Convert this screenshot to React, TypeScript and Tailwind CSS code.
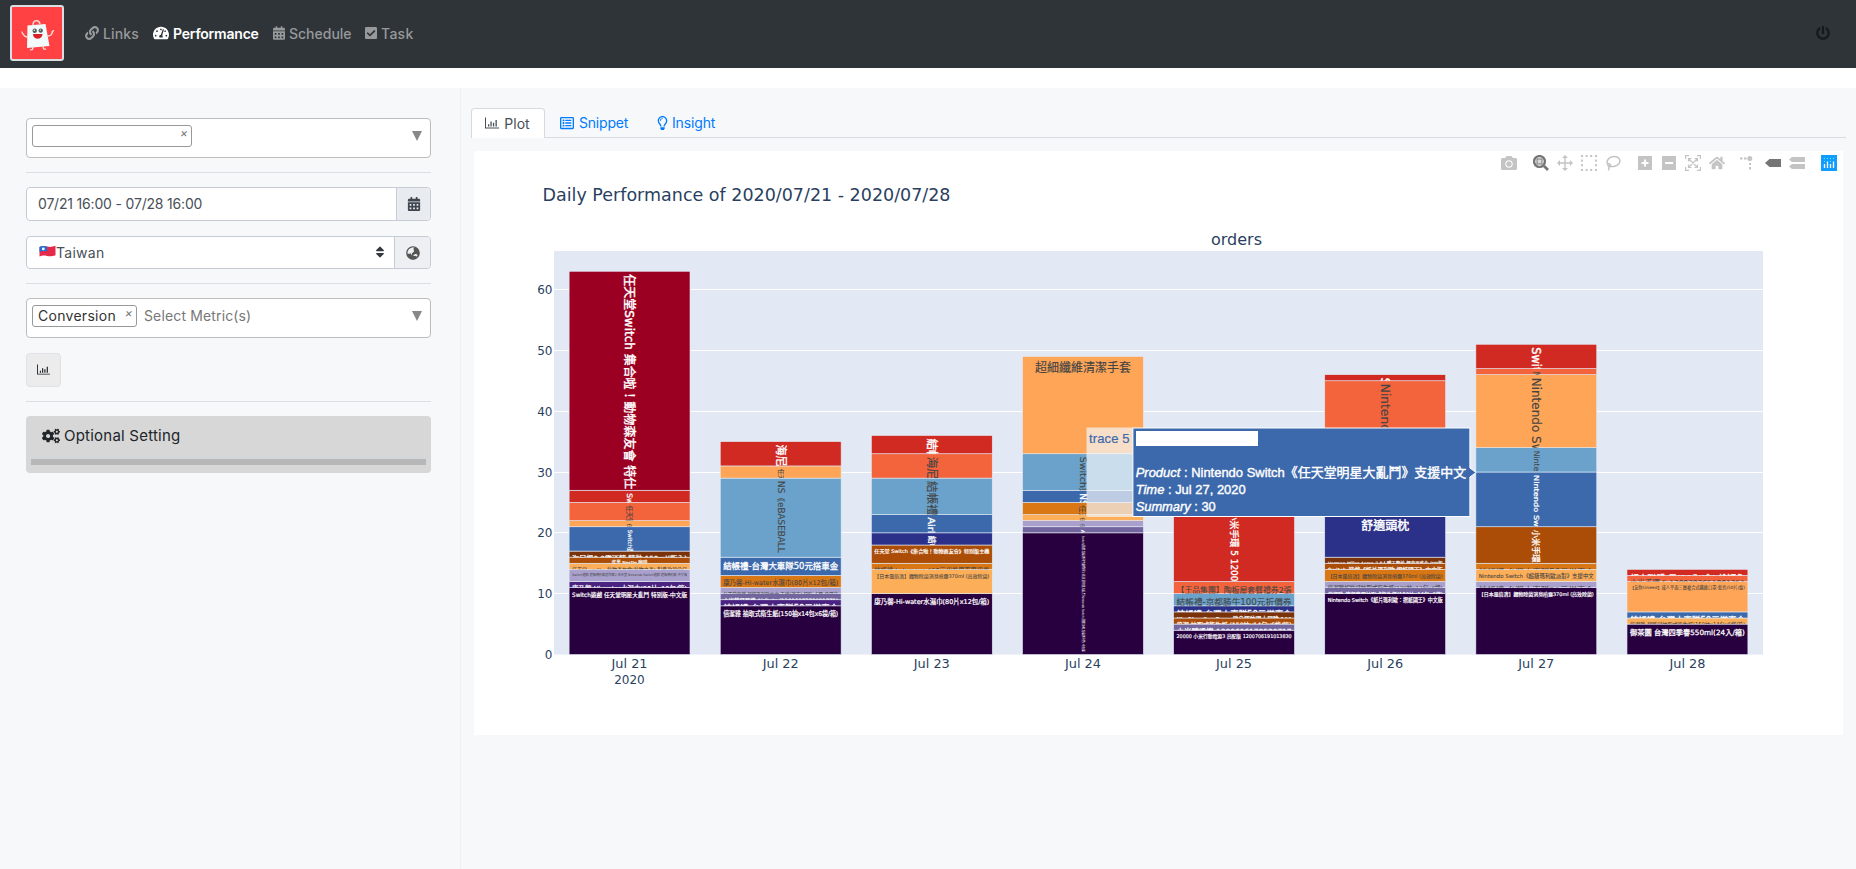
import React from "react";
import {
  FaLink,
  FaTachometerAlt,
  FaCalendarAlt,
  FaCheckSquare,
  FaPowerOff,
  FaCogs,
  FaGlobeAsia,
  FaSort,
  FaRegListAlt,
  FaRegLightbulb,
  FaCamera,
  FaHome,
} from "react-icons/fa";

const PURPLE = "#29003f";
const VIOLET = "#4a2480";
const MAUVE = "#73669f";
const LILAC = "#a9a0cd";
const APRICOT = "#fdae58";
const OCHRE = "#d97714";
const RUST = "#ab4d07";
const BROWN = "#7a320a";
const NAVY = "#2b3088";
const BLUE = "#3c69ab";
const SKY = "#6aa2cb";
const PEACH = "#fea557";
const ORANGE = "#f3633c";
const RED = "#d02a22";
const CRIMSON = "#9b0022";
const LIGHT_FILLS = [LILAC, APRICOT, OCHRE, SKY, PEACH, ORANGE];

type Segment = {
  to: number;
  fill: string;
  text: string;
  size: number;
  vertical?: boolean;
  length?: number;
};

const h = (to: number, fill: string, text: string, size: number, length = 115): Segment => ({ to, fill, text, size, length });
const v = (to: number, fill: string, text: string, size: number, length?: number): Segment => ({
  to,
  fill,
  text,
  size,
  length,
  vertical: true,
});

const days: { label: string; segments: Segment[] }[] = [
  {
    label: "Jul 21",
    segments: [
      h(11, PURPLE, "Switch遊戲 任天堂明星大亂鬥 特別版-中文版", 6),
      h(12, VIOLET, "康乃馨-Hi-water水濕巾(80片x12包/箱)", 6.6),
      h(14, LILAC, "Switch遊戲 超級瑪利歐創作家2 任天堂 Nintendo Switch遊戲 超級瑪利歐-中文版", 3.4),
      h(15, APRICOT, "任天堂 amiibo 動物森友會(動物之森) 對應款項公仔", 5.2),
      h(16, RUST, "雀巢 Nestle 咖啡", 4, 36),
      h(17, BROWN, "海尼根0.0零酒精 精裝 150ml(瓶入)", 7),
      v(21, BLUE, "Switch遊戲 任天堂", 5.6),
      v(22, PEACH, "任天堂", 4.5),
      v(25, ORANGE, "任天堂 Switch", 6.3),
      v(27, RED, "Switch", 7.5),
      v(63, CRIMSON, "任天堂Switch 集合啦！動物森友會 特仕", 12, 215),
    ],
  },
  {
    label: "Jul 22",
    segments: [
      h(8, PURPLE, "倍潔雅 抽取式衛生紙(150抽x14包x6袋/箱)", 6.6),
      h(9, VIOLET, "結帳禮-台灣大車隊50元搭車金", 8),
      h(10, MAUVE, "小米藍牙耳機 AirDots (1200608370901771)", 6),
      h(11, LILAC, "任天堂遊戲 超級瑪利歐中文 支援(漢字) 冒險 卡匣-公司貨", 5),
      h(13, OCHRE, "康乃馨-Hi-water水濕巾(80片x12包/箱)", 6.6),
      h(16, BLUE, "結帳禮-台灣大車隊50元搭車金", 8.5),
      v(29, SKY, "NS《eBASEBALL", 8.4, 71.5),
      v(31, PEACH, "任天堂", 6),
      v(35, RED, "海尼根", 11),
    ],
  },
  {
    label: "Jul 23",
    segments: [
      h(10, PURPLE, "康乃馨-Hi-water水濕巾(80片x12包/箱)", 6.6),
      h(14, APRICOT, "【日本風倍清】織物除菌消臭噴霧370ml (高效除菌)", 5.1),
      h(15, OCHRE, "結帳禮-Lalamove $50元代券優惠專用券", 6.6),
      h(18, RUST, "任天堂 Switch《集合啦！動物森友會》特別版主機", 5.1),
      v(20, NAVY, "結帳禮", 8),
      v(23, BLUE, "AirPods", 9.5),
      v(29, SKY, "結帳禮-台灣", 11.6),
      v(33, ORANGE, "海尼根", 11.6),
      v(36, RED, "結帳禮", 11.6),
    ],
  },
  {
    label: "Jul 24",
    segments: [
      v(20, PURPLE, "Switch遊戲 超級瑪利歐創作家2 任天堂明星大亂鬥 Nintendo Switch 遊戲主機 超級瑪利歐-中文版", 3.2, 116),
      v(21, MAUVE, "A", 5),
      v(22, LILAC, "任天", 4.2),
      v(23, APRICOT, "任天", 4.5),
      v(25, OCHRE, "任天堂", 7),
      v(27, BLUE, "NS Lite", 9),
      v(33, SKY, "Switch遊戲", 8.7, 50),
      h(49, PEACH, "超細纖維清潔手套", 12, 96),
    ],
  },
  {
    label: "Jul 25",
    segments: [
      h(4, PURPLE, "20000 小米行動電源3 高配版 1200706191013830", 5),
      h(5, MAUVE, "小米體重機 1200606170520717", 7),
      h(6, RUST, "倍潔 抽取式衛生紙 (150抽x14包x6袋/箱)", 6),
      h(7, BROWN, "Nin Ring Con Bung 健身運動環大冒險 100", 6.4),
      h(8, NAVY, "結帳禮-台灣大車隊50元搭車金", 8),
      h(10, SKY, "結帳禮-京都勝牛100元折價券", 8.2),
      h(12, ORANGE, "【王品集團】陶板屋套餐禮券2張", 7.8),
      v(24, RED, "小米手環 5 1200", 9.2, 70),
    ],
  },
  {
    label: "Jul 26",
    segments: [
      h(10, PURPLE, "Nintendo Switch《紙片瑪利歐：摺紙國王》中文版", 5.4),
      h(11, MAUVE, "倍潔雅-清潔專用抽取式衛生紙(150抽x14包x6袋)", 5),
      h(12, LILAC, "倍潔雅超質感抽取式衛生紙(120抽x12包x6袋)", 5.2),
      h(14, OCHRE, "【日本風倍清】織物除菌消臭噴霧370ml (高效除菌)", 5.1),
      h(15, RUST, "Switch 遊戲《紙片瑪利歐 摺紙國王》中文版", 5.6),
      h(16, BROWN, "Herman Miller Aeron 2.0人體工學椅 經典再進化-DW版", 4.5),
      h(23, NAVY, "舒適頭枕", 12, 48),
      v(45, ORANGE, "Nintendo Switch", 12, 100),
      v(46, RED, "Switch", 12),
    ],
  },
  {
    label: "Jul 27",
    segments: [
      h(11, PURPLE, "【日本風倍清】織物除菌消臭噴霧370ml (高效除菌)", 5.1),
      h(12, LILAC, "結帳禮-台灣大車隊50元搭車金", 7.8),
      h(14, APRICOT, "Nintendo Switch《超級瑪利歐派對》支援中文", 5.5),
      h(15, OCHRE, "結帳禮-台灣大車隊50元搭車金", 8),
      v(21, RUST, "小米手環 5", 8.2),
      v(30, BLUE, "Nintendo Switch", 6.8, 67),
      v(34, SKY, "Nintendo", 7.7),
      v(46, PEACH, "Nintendo Switch", 12, 98),
      v(47, ORANGE, "Nin", 9),
      v(51, RED, "Switch", 11.4),
    ],
  },
  {
    label: "Jul 28",
    segments: [
      h(5, PURPLE, "御茶園 台灣四季春550ml(24入/箱)", 7.2),
      h(6, APRICOT, "倍潔雅 超質感抽取式衛生紙(150抽x14包x6袋/箱)", 5),
      h(7, BLUE, "結帳禮-台灣大車隊50元搭車金", 8),
      h(12, PEACH, "【友你Unieed】成人平面三層複合式纖維口罩-藍色(50片/盒)", 4.3),
      h(13, ORANGE, "小米手環 5 1200703651001351", 6.6),
      h(14, RED, "超人聯盟-男(30入/盒) 維穎魚", 7.8),
    ],
  },
];

const BASE = 654.5;
const UNIT = 6.083;
const STEP = 151.125;
const BAR = 120.9;
const CHART_FONT = "'DejaVu Sans', 'Noto Sans CJK TC', sans-serif";
const HOVER_FONT = "'Liberation Sans', 'Noto Sans CJK TC', sans-serif";

function Bar({ segment, from, x }: { segment: Segment; from: number; x: number }) {
  const top = BASE - segment.to * UNIT;
  const height = (segment.to - from) * UNIT;
  const light = LIGHT_FILLS.includes(segment.fill);
  const ink = light ? "#444444" : "#ffffff";
  const outline = segment.size < 4 ? 0 : segment.size * (light ? 0.012 : 0.035);
  const fit = segment.length ? { textLength: segment.length, lengthAdjust: "spacingAndGlyphs" as const } : {};
  return (
    <>
      <rect x={x} y={top} width={BAR} height={height} fill={segment.fill} stroke="#e5ecf6" strokeWidth="0.6" />
      <svg x={x} y={top} width={BAR} height={height} overflow="hidden">
        {segment.vertical ? (
          <text
            transform={`translate(${BAR / 2 - segment.size * 0.36} 3) rotate(90)`}
            fontSize={segment.size}
            fill={ink}
            stroke={ink}
            strokeWidth={outline}
            {...fit}
          >
            {segment.text}
          </text>
        ) : (
          <text
            x={(BAR - (segment.length ?? 115)) / 2}
            y={3 + segment.size * 1.05}
            fontSize={segment.size}
            fill={ink}
            stroke={ink}
            strokeWidth={outline}
            {...fit}
          >
            {segment.text}
          </text>
        )}
      </svg>
    </>
  );
}

function Chart() {
  return (
    <svg width="1369" height="556" viewBox="474 179 1369 556" className="block" fontFamily={CHART_FONT}>
      <text x="542.5" y="201" fontSize="17" fill="#2a3f5f" textLength="408" lengthAdjust="spacingAndGlyphs">
        Daily Performance of 2020/07/21 - 2020/07/28
      </text>
      <text x="1236.5" y="245" fontSize="16" fill="#2a3f5f" textAnchor="middle" textLength="51" lengthAdjust="spacingAndGlyphs">
        orders
      </text>
      <rect x="554" y="251" width="1209" height="403.5" fill="#e2e8f4" />
      {[10, 20, 30, 40, 50, 60].map((n) => (
        <rect key={n} x="554" y={Math.round(BASE - n * UNIT - 0.5)} width="1209" height="1" fill="#ffffff" />
      ))}
      {[0, 10, 20, 30, 40, 50, 60].map((n) => (
        <text key={n} x="552.5" y={BASE - n * UNIT + 4.5} fontSize="12" fill="#2a3f5f" textAnchor="end">
          {n}
        </text>
      ))}
      {days.map((day, i) => {
        const x = 554 + STEP * i + (STEP - BAR) / 2;
        return (
          <g key={day.label}>
            {day.segments.map((s, k) => (
              <Bar key={k} segment={s} from={k ? day.segments[k - 1].to : 0} x={x} />
            ))}
            <text x={x + BAR / 2} y="668" fontSize="12" fill="#2a3f5f" textAnchor="middle" textLength="36" lengthAdjust="spacingAndGlyphs">
              {day.label}
            </text>
          </g>
        );
      })}
      <text x="629.5" y="684" fontSize="12" fill="#2a3f5f" textAnchor="middle">
        2020
      </text>
      <g fontFamily={HOVER_FONT} fontSize="13">
        <rect x="1086.5" y="427.5" width="46.5" height="89.5" fill="#f4f6fa" fillOpacity="0.7" />
        <text x="1089" y="443" fill="#3c69ab" stroke="#3c69ab" strokeWidth="0.2" textLength="40.5">
          trace 5
        </text>
        <path d="M1132.9 428h337v40l6.2 4.5-6.2 4.5v39.5h-337z" fill="#3c69ab" stroke="#ffffff" strokeWidth="1" />
        <rect x="1136" y="431" width="122" height="15" fill="#ffffff" />
        <g fill="#ffffff" stroke="#ffffff" strokeWidth="0.4">
          <text x="1135.7" y="477" textLength="330.5" lengthAdjust="spacingAndGlyphs">
            <tspan fontStyle="italic">Product</tspan> : Nintendo Switch《任天堂明星大亂鬥》支援中文
          </text>
          <text x="1135.7" y="494" textLength="110" lengthAdjust="spacingAndGlyphs">
            <tspan fontStyle="italic">Time</tspan> : Jul 27, 2020
          </text>
          <text x="1135.7" y="511" textLength="80" lengthAdjust="spacingAndGlyphs">
            <tspan fontStyle="italic">Summary</tspan> : 30
          </text>
        </g>
      </g>
    </svg>
  );
}

function ChartIcon({ className }: { className?: string }) {
  return (
    <svg viewBox="0 0 14 12" className={className} fill="currentColor">
      <path d="M0 .5h1v10h13v1H0zM3 7.3h1.3v2.2H3zM5.4 4.6h1.3v4.9H5.4zM7.9 5.8h1.3v3.7H7.9zM10.5 3h1.3v6.5h-1.3z" />
    </svg>
  );
}

function Logo() {
  return (
    <svg viewBox="0 0 50 52" className="h-[52px] w-[50px]">
      <path d="M15.5 18.5 33.5 17 37.5 39 15 41z" fill="#f3fafc" />
      <path d="M21 18c0-5 6-6 7-1" fill="none" stroke="#f6d4d4" strokeWidth="1.6" />
      <path
        d="M15 30c-3-.2-3-1.8-4-3M11 27l-1.2-2M36 29c4-.3 4-2.3 4.5-4M40 25l1.6-1.4M21 40l-.5 2.5-2 .3M31 39.5l.6 2.5 2 .2"
        fill="none"
        stroke="#fbdede"
        strokeWidth="1.3"
        strokeLinecap="round"
      />
      <circle cx="22.7" cy="23.8" r="2.2" fill="#50605c" />
      <circle cx="28.7" cy="23.6" r="2.2" fill="#50605c" />
      <circle cx="22.3" cy="23.3" r=".7" fill="#fff" />
      <circle cx="28.3" cy="23.1" r=".7" fill="#fff" />
      <path d="M21 27h9.5c0 6-9.5 6.5-9.5 0z" fill="#d8202a" />
    </svg>
  );
}

function Flag() {
  return (
    <svg viewBox="0 0 17 13" className="-mt-0.5 h-[13px] w-[17px]">
      <path d="M.5 2C3 .5 5 .7 8 1.5s5 .5 8.500-.7v9.500c-3 1.200-5.500 1.300-8.500.6s-5-.6-7.500.7z" fill="#e5294b" />
      <path d="M.5 2C3 .5 5 .7 8 1.5v5C5 5.800 3 5.800.5 7z" fill="#1c72d4" />
      <circle cx="4.3" cy="3.9" r="1.4" fill="#fff" />
    </svg>
  );
}

function ModeBar() {
  return (
    <div className="flex h-7 items-start pl-[1027px] pt-1 text-[#c4c4c4]">
      <FaCamera className="h-4 w-4" />
      <svg viewBox="0 0 16 16" className="ml-4 h-4 w-4 text-[#757575]">
        <circle cx="6.5" cy="6.5" r="5.4" fill="none" stroke="currentColor" strokeWidth="2.4" />
        <rect x="4" y="4" width="5" height="5" fill="#ddd" stroke="currentColor" />
        <path d="m11 11 4 4" stroke="currentColor" strokeWidth="2.6" />
      </svg>
      <svg viewBox="0 0 16 16" className="ml-2 h-4 w-4" fill="currentColor">
        <path d="M7.3 2v5.3H2v1.4h5.3V14h1.400V8.700H14V7.300H8.700V2z" />
        <path d="M8 0l3 3H5zM8 16l3-3H5zM0 8l3-3v6zM16 8l-3-3v6z" />
      </svg>
      <svg viewBox="0 0 16 16" className="ml-2 h-4 w-4" fill="currentColor">
        {[0, 4.6, 9.2, 14].map((p) => (
          <g key={p}>
            <rect x={p} y="0" width="2" height="2" />
            <rect x={p} y="14" width="2" height="2" />
            <rect x="0" y={p} width="2" height="2" />
            <rect x="14" y={p} width="2" height="2" />
          </g>
        ))}
      </svg>
      <svg viewBox="0 0 16 16" className="ml-2 h-4 w-4" fill="none" stroke="currentColor" strokeWidth="1.5">
        <ellipse cx="8.5" cy="6.5" rx="6.5" ry="5" transform="rotate(-14 8.5 6.5)" />
        <path d="M2 9c1.5-1.5 4 .5 3.500 2s-3 .5-2.500-1M4 12l-.5 3.500" />
      </svg>
      <svg viewBox="0 0 14 14" className="ml-[17px] mt-px h-3.5 w-3.5">
        <path d="M0 0h14v14H0z" fill="currentColor" />
        <path d="M7 3.500v7M3.500 7h7" stroke="#fff" strokeWidth="2" />
      </svg>
      <svg viewBox="0 0 14 14" className="ml-2.5 mt-px h-3.5 w-3.5">
        <path d="M0 0h14v14H0z" fill="currentColor" />
        <path d="M3 7h8" stroke="#fff" strokeWidth="2" />
      </svg>
      <svg viewBox="0 0 16 16" className="ml-[9px] h-4 w-4" fill="none" stroke="currentColor" strokeWidth="1.2">
        <path d="M.6 4V.6H4M12 .6h3.400V4M.6 12v3.400H4M12 15.400h3.400V12M4 4l8 8M12 4l-8 8M3.500 6.500v-3h3M9.500 3.500h3v3M3.500 9.500v3h3M9.500 12.500h3v-3" />
      </svg>
      <FaHome className="ml-2 h-4 w-4" />
      <svg viewBox="0 0 16 16" className="ml-3.5 h-4 w-4" fill="currentColor">
        <rect x="1" y="2.5" width="2.5" height="2" />
        <rect x="5" y="2.5" width="2.5" height="2" />
        <circle cx="10.8" cy="3.5" r="2.5" />
        <rect x="10" y="8" width="2" height="2" />
        <rect x="10" y="12" width="2" height="2.5" />
      </svg>
      <svg viewBox="0 0 16 16" className="ml-2.5 h-4 w-4 text-[#757575]" fill="currentColor">
        <path d="M0 8l4.500-4H16v8H4.500z" />
      </svg>
      <svg viewBox="0 0 16 16" className="ml-2 h-4 w-4" fill="currentColor">
        <path d="M0 4.500 3 2h13v5H3zM0 11.500 3 9h13v5H3z" />
      </svg>
      <svg viewBox="0 0 16 16" className="ml-4 h-4 w-4">
        <path d="M0 0h16v16H0z" fill="#119dff" />
        <path d="M3.500 9v4M6.500 6.500V13M9.500 9v4M12.500 6.500V13" stroke="#fff" strokeWidth="1.3" />
        <path d="M3 3.500h1M6 3.500h1M9 3.500h1M12 3.500h1M3 6.500h1M9 6.500h1" stroke="#55f5f5" strokeWidth="1.2" />
      </svg>
    </div>
  );
}

function NavItem({ icon, label, className }: { icon: React.ReactNode; label: string; className: string }) {
  return (
    <a className={`flex items-center gap-1 ${className}`}>
      {icon}
      <span>{label}</span>
    </a>
  );
}

function MultiSelect({ children }: { children: React.ReactNode }) {
  return (
    <div className="flex h-10 items-start justify-between rounded border border-[#bdbdbd] bg-white pl-[5px] pr-2 pt-1.5">
      <div className="flex h-[22px] items-center">{children}</div>
      <svg viewBox="0 0 10 10" className="mt-1.5 h-2.5 w-2.5">
        <path d="M0 0h10L5 10z" fill="#888" />
      </svg>
    </div>
  );
}

export default function App() {
  return (
    <div className="flex h-[869px] w-[1856px] flex-col overflow-hidden bg-white font-['Inter','Noto_Sans_CJK_TC',sans-serif] text-[#212529]">
      <nav className="flex h-[68px] shrink-0 items-center bg-[#2f3438] pb-[2px] pl-[10px] pr-[26px] text-[14px] font-medium text-[#97999b]">
        <div className="flex h-14 w-[54px] items-center justify-center rounded-[3px] border-2 border-[#dadde2] bg-[#ff4143]">
          <Logo />
        </div>
        <NavItem className="ml-[21px] w-[68px] tracking-[0.01em]" icon={<FaLink className="h-3.5 w-3.5" />} label="Links" />
        <NavItem
          className="w-[120px] font-semibold tracking-[-0.015em] text-white"
          icon={<FaTachometerAlt className="h-4 w-4" />}
          label="Performance"
        />
        <NavItem className="w-[92px]" icon={<FaCalendarAlt className="h-3.5 w-3" />} label="Schedule" />
        <NavItem className="tracking-[0.02em]" icon={<FaCheckSquare className="h-3.5 w-3" />} label="Task" />
        <FaPowerOff className="ml-auto h-3.5 w-3.5 text-[#16191b]" />
      </nav>
      <div className="mt-5 flex min-h-0 flex-1 bg-[#f7f8fa]">
        <aside className="flex w-[461px] shrink-0 flex-col border-r border-[#eff0f2] pl-[26px] pr-[29px] pt-[30px] text-[15px]">
          <MultiSelect>
            <div className="flex h-[22px] w-40 justify-end rounded-[3px] border border-[#999] pr-[3px] text-[12px] italic leading-[14px] text-[#777]">
              ×
            </div>
          </MultiSelect>
          <hr className="mb-[14px] mt-[14px] border-[#dcdee1]" />
          <div className="flex h-[34px] overflow-hidden rounded border border-[#c6ccd4] bg-white">
            <div className="flex flex-1 items-center pb-px pl-[11px] text-[14px] tracking-[-0.013em] text-[#495057]">
              07/21 16:00 - 07/28 16:00
            </div>
            <div className="flex w-[34px] items-center justify-center border-l border-[#c6ccd4] bg-[#e8ebef] text-[#3f4650]">
              <FaCalendarAlt className="h-3.5 w-3.5" />
            </div>
          </div>
          <div className="mt-[15px] flex h-[33px] overflow-hidden rounded border border-[#c6ccd4] bg-white">
            <div className="flex flex-1 items-center pb-px pl-3 pr-2 text-[14px] tracking-[0.02em] text-[#495057]">
              <Flag />
              <span className="flex-1">Taiwan</span>
              <FaSort className="h-3.5 w-3 text-[#343a40]" />
            </div>
            <div className="flex w-[36px] items-center justify-center border-l border-[#c6ccd4] bg-[#eeeff2] text-[#555]">
              <FaGlobeAsia className="h-3.5 w-3.5" />
            </div>
          </div>
          <hr className="mb-[14px] mt-[14px] border-[#dcdee1]" />
          <MultiSelect>
            <div className="flex h-[22px] w-[105px] items-center justify-between rounded-[3px] border border-[#999] pl-[5px] pr-[3px] text-[14px] tracking-[0.02em] text-[#333]">
              <span className="pb-0.5">Conversion</span>
              <span className="self-start text-[12px] italic leading-[14px] text-[#777]">×</span>
            </div>
            <span className="ml-[7px] pb-0.5 text-[14px] tracking-[0.01em] text-[#777]">Select Metric(s)</span>
          </MultiSelect>
          <button className="mt-[15px] flex h-[34px] w-[35px] items-center justify-center rounded border border-[#dfe1e4] bg-[#ececec]">
            <ChartIcon className="mb-0.5 h-[11px] w-[13px]" />
          </button>
          <hr className="mb-[14px] mt-[14px] border-[#dcdee1]" />
          <div className="flex h-[57px] flex-col rounded bg-[#d7d7d7] px-[5px] pt-2">
            <div className="flex h-6 items-center gap-1 pl-[11px] text-[15px] tracking-[0.015em]">
              <FaCogs className="h-[18px] w-[18px]" />
              <span>Optional Setting</span>
            </div>
            <div className="mt-2.5 h-[7px] border-t border-[#cdd8e0] bg-[#b7b7b7]" />
          </div>
        </aside>
        <main className="flex flex-1 flex-col pl-[10px] pr-[10px] pt-5">
          <div className="flex h-[30px] border-b border-[#d9dcdf] text-[14px] text-[#007bff]">
            <div className="flex h-[30px] w-[74px] items-center justify-center gap-[5px] rounded-t border border-b-0 border-[#d5dade] bg-white pb-px pr-px text-[#495057]">
              <ChartIcon className="mb-px h-3 w-3.5" />
              Plot
            </div>
            <div className="ml-[15px] flex w-[69px] items-center gap-[5px] tracking-[-0.015em]">
              <FaRegListAlt className="h-3.5 w-3.5" />
              Snippet
            </div>
            <div className="ml-[28px] flex items-center gap-1 tracking-[-0.01em]">
              <FaRegLightbulb className="h-3.5 w-[11px]" />
              Insight
            </div>
          </div>
          <div className="ml-[3px] mt-[13px] h-[584px] w-[1369px] bg-white">
            <ModeBar />
            <Chart />
          </div>
        </main>
      </div>
    </div>
  );
}
